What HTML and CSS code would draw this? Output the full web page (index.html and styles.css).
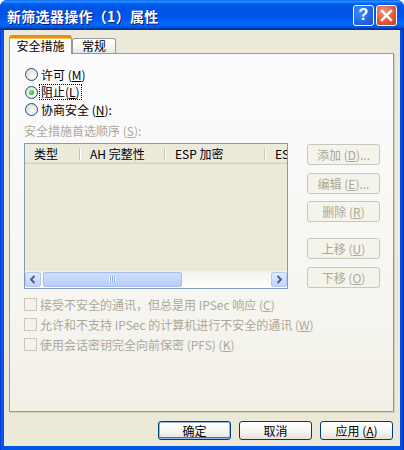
FILE: index.html
```html
<!DOCTYPE html>
<html lang="zh-CN">
<head>
<meta charset="utf-8">
<title>新筛选器操作（1）属性</title>
<link rel="stylesheet" href="styles.css">
</head>
<body>
<div class="window">
  <div class="titlebar">
    <span class="title">新筛选器操作（1）属性</span>
    <div class="caption-btns">
      <span class="cbtn help">?</span>
      <span class="cbtn close"><svg width="13" height="13" viewBox="0 0 13 13"><path d="M2 2 L11 11 M11 2 L2 11" stroke="#fff" stroke-width="2.4" stroke-linecap="square"/></svg></span>
    </div>
  </div>
  <div class="client">
    <div class="tabs">
      <div class="tab active">安全措施</div>
      <div class="tab">常规</div>
    </div>
    <div class="panel">
      <div class="radios">
        <div class="radio"><span class="rb"></span><span class="rtext">许可 (<u>M</u>)</span></div>
        <div class="radio"><span class="rb checked"></span><span class="rtext focus">阻止(<u>L</u>)</span></div>
        <div class="radio"><span class="rb"></span><span class="rtext">协商安全 (<u>N</u>):</span></div>
      </div>
      <div class="caption dis">安全措施首选顺序 (<u>S</u>):</div>
      <div class="listarea">
        <div class="listview">
          <div class="lv-header">
            <div class="col c1">类型</div>
            <div class="col c2">AH 完整性</div>
            <div class="col c3">ESP 加密</div>
            <div class="col c4">ES</div>
          </div>
          <div class="lv-body"></div>
          <div class="hscroll">
            <span class="sbtn"><svg width="8" height="9" viewBox="0 0 8 9"><path d="M5.5 1 L2 4.5 L5.5 8" fill="none" stroke="#4D6185" stroke-width="2"/></svg></span>
            <span class="thumb"><span class="grip"></span></span>
            <span class="track"></span>
            <span class="sbtn"><svg width="8" height="9" viewBox="0 0 8 9"><path d="M2.5 1 L6 4.5 L2.5 8" fill="none" stroke="#4D6185" stroke-width="2"/></svg></span>
          </div>
        </div>
        <div class="sidebtns">
          <span class="btn dis">添加 (<u>D</u>)...</span>
          <span class="btn dis">编辑 (<u>E</u>)...</span>
          <span class="btn dis gap-s">删除 (<u>R</u>)</span>
          <span class="btn dis gap-l">上移 (<u>U</u>)</span>
          <span class="btn dis">下移 (<u>O</u>)</span>
        </div>
      </div>
      <div class="checks">
        <div class="check dis"><span class="cb"></span><span>接受不安全的通讯，但总是用 IPSec 响应 (<u>C</u>)</span></div>
        <div class="check dis"><span class="cb"></span><span>允许和不支持 IPSec 的计算机进行不安全的通讯 (<u>W</u>)</span></div>
        <div class="check dis"><span class="cb"></span><span>使用会话密钥完全向前保密 (PFS) (<u>K</u>)</span></div>
      </div>
    </div>
    <div class="footer">
      <span class="btn default">确定</span>
      <span class="btn">取消</span>
      <span class="btn">应用 (<u>A</u>)</span>
    </div>
  </div>
</div>
</body>
</html>
```

FILE: styles.css
```css
* { box-sizing: border-box; }
html, body { margin: 0; padding: 0; }
body {
  width: 404px;
  height: 450px;
  overflow: hidden;
  font-family: "Noto Sans CJK SC", "Noto Sans", sans-serif;
  font-size: 12px;
  color: #000;
  background: #fff;
}
u { text-decoration: underline; text-underline-offset: 1px; }

.window {
  width: 404px;
  height: 450px;
  display: flex;
  flex-direction: column;
  background: linear-gradient(to right, #0019CF 0, #0A5AEA 1px, #0055E5 3px, #0055E5 400px, #0A3FD0 403px, #001EA0 404px);
  border-radius: 7px 7px 0 0;
  overflow: hidden;
}

.titlebar {
  height: 30px;
  flex: none;
  display: flex;
  align-items: center;
  justify-content: space-between;
  padding: 0 7px 0 7px;
  background: linear-gradient(to bottom, #0058EE 0%, #3593FF 4%, #288EFF 6%, #127DFF 8%, #036FFC 10%, #0262EE 14%, #0057E5 20%, #0054E3 24%, #0055EB 56%, #005BF5 66%, #026AFE 76%, #0062EF 86%, #0052D6 92%, #0040AB 94%, #003092 100%);
}
.title {
  color: #fff;
  font-weight: bold;
  font-size: 14px;
  line-height: 16px;
  letter-spacing: 0.3px;
  text-shadow: 1px 1px 0 #0A1883;
  padding-top: 1px;
}
.caption-btns { display: flex; gap: 2px; }
.cbtn {
  width: 21px;
  height: 21px;
  border: 1px solid #fff;
  border-radius: 3px;
  display: flex;
  align-items: center;
  justify-content: center;
}
.cbtn.help {
  background: radial-gradient(circle at 30% 30%, #3C8DFF 0%, #2663E0 60%, #1B4FD0 100%);
  color: #fff;
  font-family: "Liberation Sans", sans-serif;
  font-weight: bold;
  font-size: 16px;
  line-height: 1;
}
.cbtn.close {
  background: radial-gradient(circle at 35% 30%, #F09A80 0%, #E2583B 55%, #C83C1C 100%);
}

.client {
  flex: 1;
  margin: 0 4px 4px 4px;
  background: #ECE9D8;
  display: flex;
  flex-direction: column;
  padding: 5px 6px 0 5px;
}

.tabs {
  display: flex;
  align-items: flex-end;
  height: 19px;
  margin-bottom: -1px;
  position: relative;
  z-index: 1;
}
.tab {
  height: 15px;
  width: 44px;
  border: 1px solid #919B9C;
  border-bottom: none;
  border-radius: 3px 3px 0 0;
  background: linear-gradient(to bottom, #FFFFFF, #F3F3EF 70%, #E6E5DE);
  text-align: center;
  line-height: 14px;
  margin-bottom: 1px;
}
.tab.active {
  height: 19px;
  width: 63px;
  background: #FCFCFE;
  border-top: 3px solid #E68B2C;
  border-color: #E68B2C #919B9C #919B9C #919B9C;
  box-shadow: inset 0 1px 0 #FFC73C;
  line-height: 15px;
  margin-bottom: 0;
  border-radius: 3px 3px 0 0;
}

.panel {
  flex: 1;
  border: 1px solid #919B9C;
  background: linear-gradient(to bottom, #FCFCFE 0%, #F6F5F0 70%, #F1EFE6 100%);
  padding: 12px 0 0 14px;
  display: flex;
  flex-direction: column;
  box-shadow: 1px 1px 0 #D0CEBF;
}

.radios { display: flex; flex-direction: column; }
.radio {
  height: 17.5px;
  display: flex;
  align-items: center;
  gap: 2px;
}
.rb {
  width: 13px;
  height: 13px;
  margin-left: 1px;
  border-radius: 50%;
  border: 1px solid #1C5180;
  background: radial-gradient(circle at 65% 65%, #FFFFFF 0%, #EAE8E0 55%, #D6D3C8 100%);
  display: flex;
  align-items: center;
  justify-content: center;
}
.rb.checked::after {
  content: "";
  width: 5px;
  height: 5px;
  border-radius: 50%;
  background: radial-gradient(circle at 40% 40%, #9CEB8C 0%, #2EB82E 60%, #1B901B 100%);
}
.rtext { line-height: 14px; padding: 0 1px; }
.rtext.focus { outline: 1px dotted #000; outline-offset: 0; }

.caption { margin-top: 4px; height: 16px; line-height: 16px; }
.dis { color: #ACA899; }

.listarea {
  display: flex;
  margin-top: 4px;
  gap: 19px;
}
.listview {
  width: 264px;
  height: 146px;
  border: 1px solid #7F9DB9;
  background: #ECE9D8;
  display: flex;
  flex-direction: column;
  overflow: hidden;
}
.lv-header {
  height: 20px;
  flex: none;
  display: flex;
  background: #EBEADB;
  box-shadow: inset 0 -1px 0 #D6D2C2, inset 0 -2px 0 #E2DECD;
  white-space: nowrap;
}
.col {
  flex: none;
  padding-left: 9px;
  line-height: 18px;
  height: 18px;
  margin-top: 1px;
  background: linear-gradient(#C7C5B2, #C7C5B2) right 1px top 3px / 1px 12px no-repeat,
              linear-gradient(#FFFFFF, #FFFFFF) right 0 top 3px / 1px 12px no-repeat;
}
.c1 { width: 56px; }
.c2 { width: 85px; }
.c3 { width: 100px; }
.c4 { width: 60px; background: none; }
.lv-body { flex: 1; }
.hscroll {
  height: 17px;
  flex: none;
  display: flex;
  background: linear-gradient(to bottom, #F3F1EC, #FEFEFB);
  padding: 1px 0;
}
.sbtn {
  width: 16px;
  height: 15px;
  border: 1px solid #B4C8F6;
  border-radius: 2px;
  background: linear-gradient(to bottom, #E1EAFE, #C1D3FB);
  display: flex;
  align-items: center;
  justify-content: center;
  flex: none;
}
.thumb {
  width: 139px;
  margin-left: 2px;
  height: 15px;
  border: 1px solid #A5BDF3;
  border-radius: 2px;
  background: linear-gradient(to bottom, #D1DFFD, #BACDF8);
  display: flex;
  align-items: center;
  justify-content: center;
  flex: none;
}
.grip {
  width: 7px;
  height: 6px;
  background: repeating-linear-gradient(to right, #EEF4FE 0 1px, #8CB0F8 1px 2px);
}
.track { flex: 1; }

.sidebtns {
  display: flex;
  flex-direction: column;
  width: 73px;
  padding-top: 1px;
}
.btn {
  height: 21px;
  border: 1px solid #003C74;
  border-radius: 3px;
  background: linear-gradient(to bottom, #FFFFFF 0%, #F4F4F0 60%, #E3E1D9 100%);
  display: flex;
  align-items: center;
  justify-content: center;
  white-space: nowrap;
}
.btn.dis {
  border-color: #C9C7BA;
  background: #F5F4EA;
  color: #ACA899;
}
.sidebtns .btn + .btn { margin-top: 8px; }
.sidebtns .btn.gap-s { margin-top: 7px; }
.sidebtns .btn.gap-l { margin-top: 16px; }

.checks {
  margin-top: 6px;
  display: flex;
  flex-direction: column;
}
.check {
  height: 20px;
  display: flex;
  align-items: center;
  gap: 3px;
  white-space: nowrap;
}
.cb {
  width: 13px;
  height: 13px;
  border: 1px solid #CAC8BB;
  background: #F3F2EC;
  flex: none;
}

.footer {
  height: 34px;
  flex: none;
  display: flex;
  justify-content: flex-end;
  align-items: flex-start;
  padding-top: 9px;
  padding-right: 1px;
  gap: 8px;
}
.footer .btn {
  width: 73px;
  height: 19px;
}
.footer .btn.default {
  box-shadow: inset 0 0 0 1px #98B8EA, inset 0 -1px 0 1px #3D6DE0;
}
```
